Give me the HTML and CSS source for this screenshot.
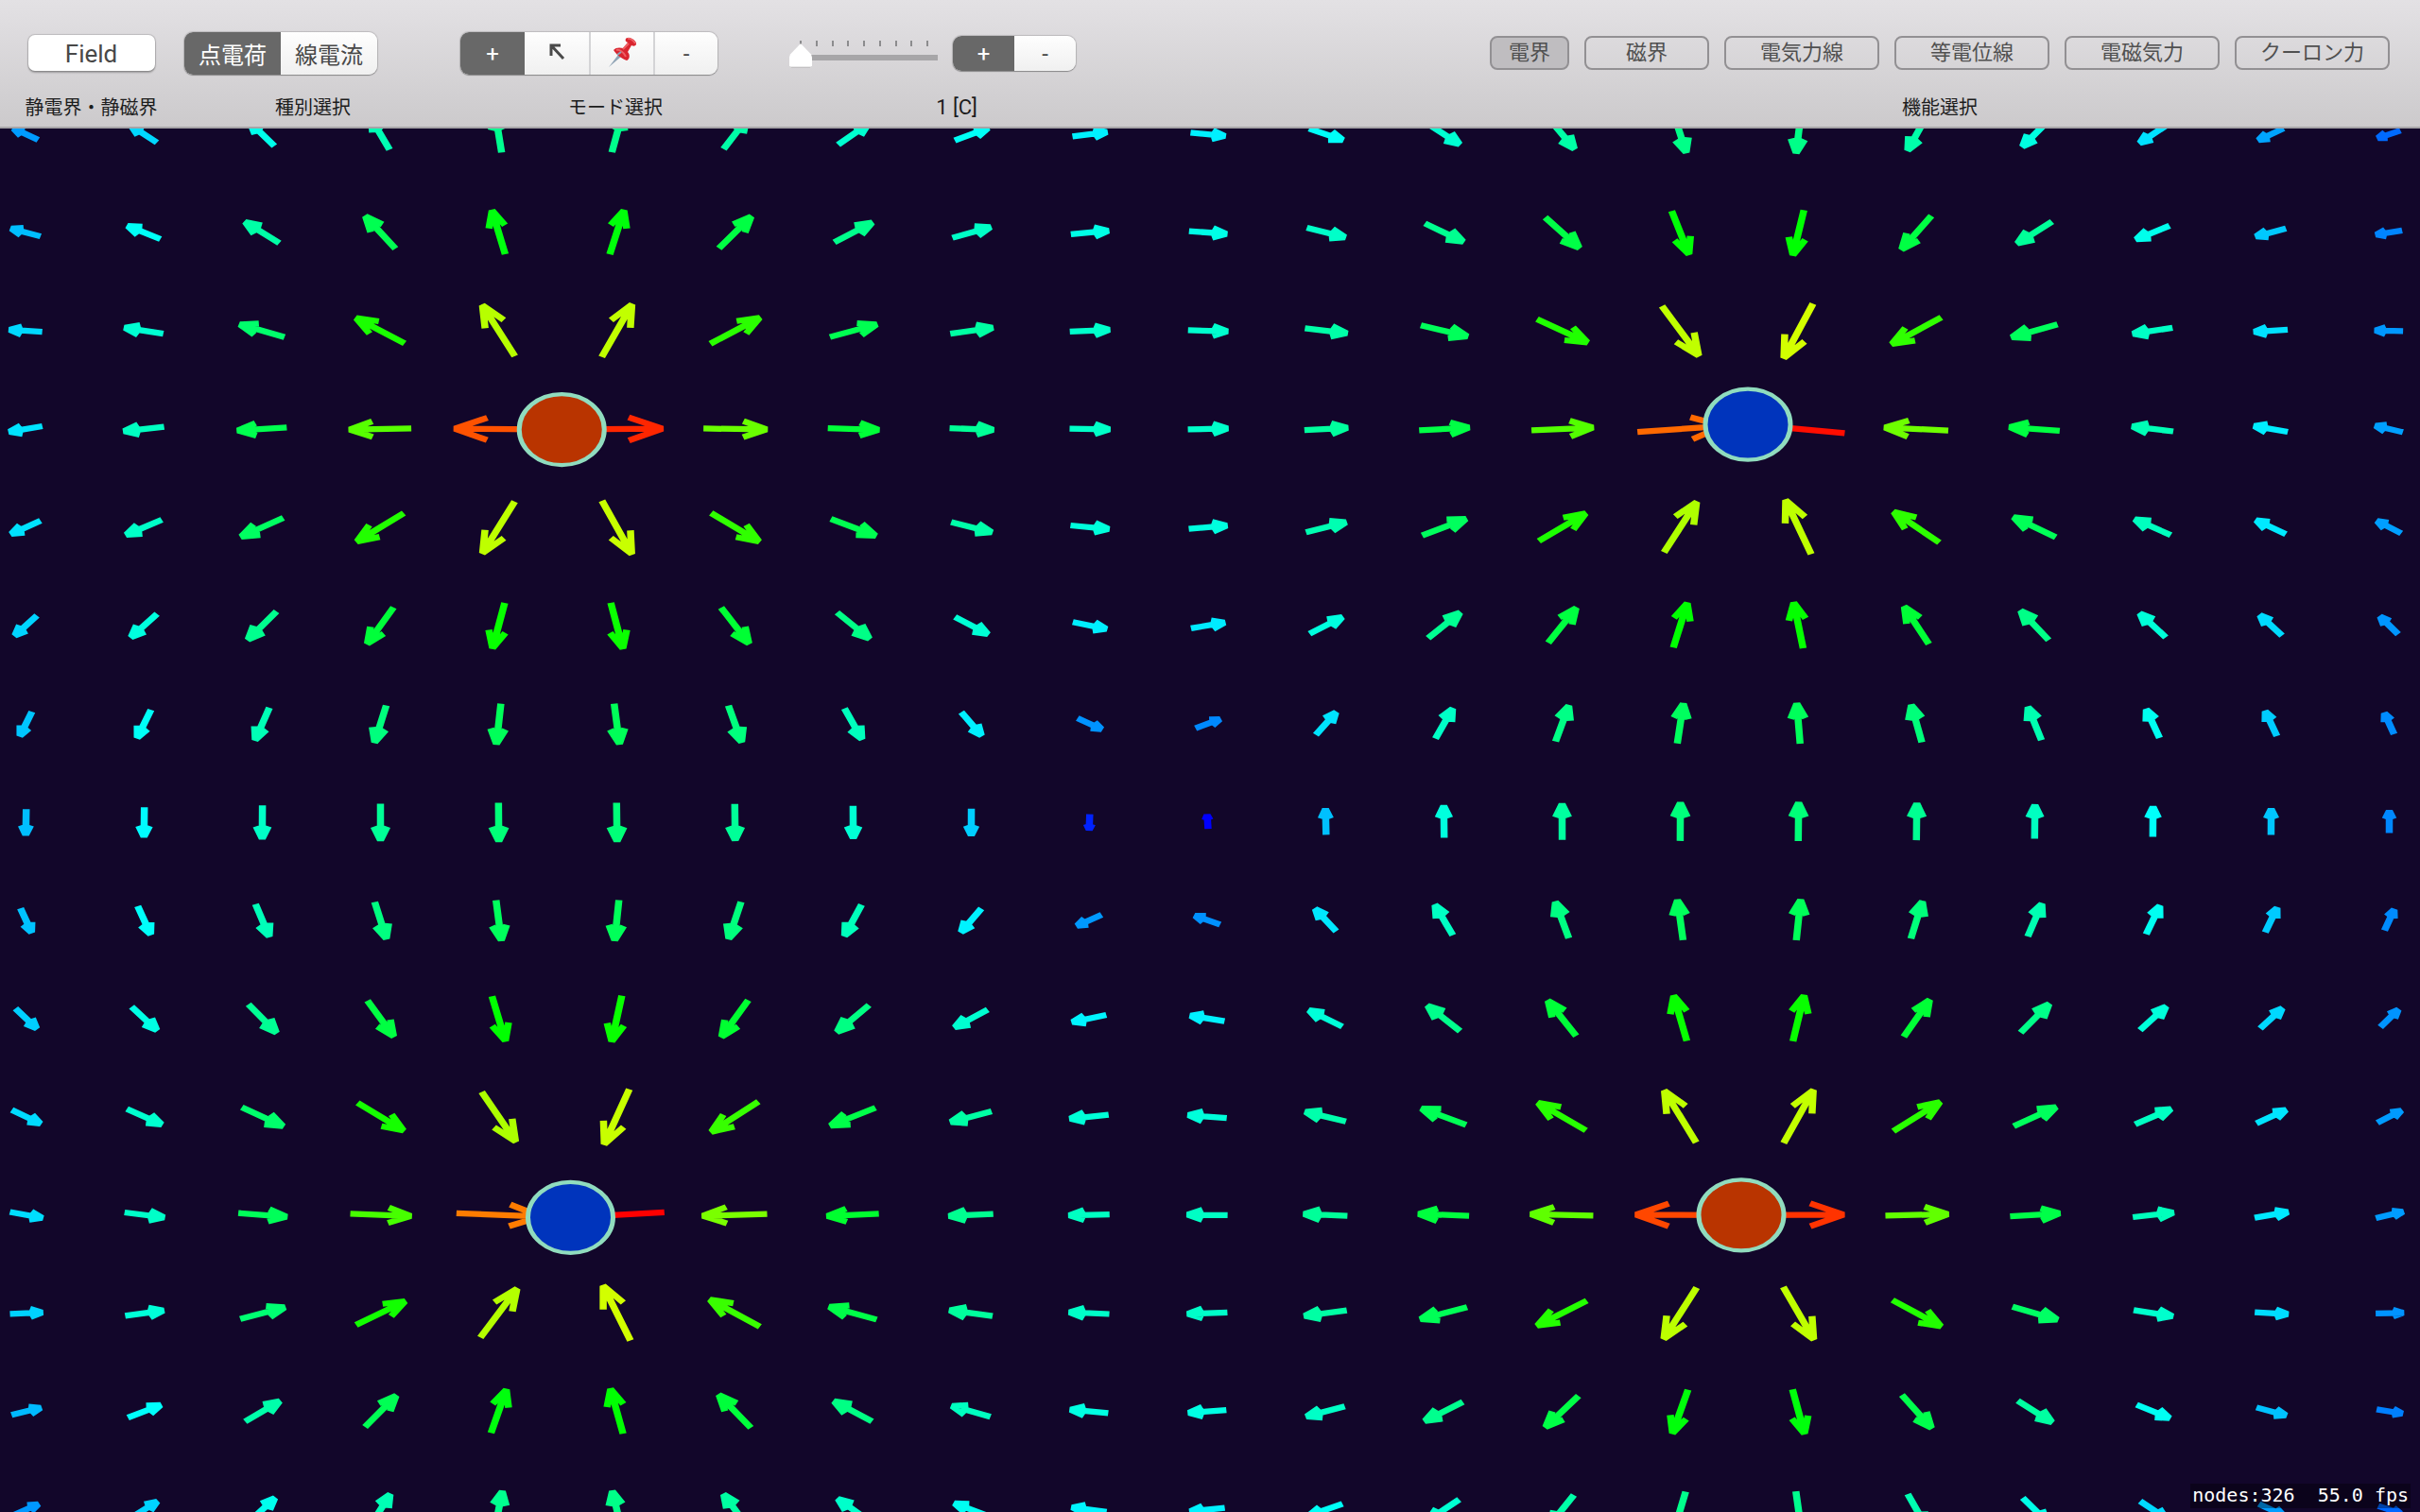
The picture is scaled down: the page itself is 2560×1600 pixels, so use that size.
FILE: index.html
```html
<!DOCTYPE html>
<html lang="ja">
<head>
  <meta charset="UTF-8" />
  <title>Field</title>
  <link rel="stylesheet" href="styles.css">
</head>
<body>
  <main class="window">
    <svg class="scene" id="scene" viewBox="0 0 1024 768" preserveAspectRatio="none" role="img" aria-label="電界">
      <g id="arrows"></g>
      <g id="charges"></g>
    </svg>

    <header class="toolbar">
      <div class="item item-field">
        <div class="controls"><button class="push">Field</button></div>
        <span class="caption">静電界・静磁界</span>
      </div>

      <div class="item item-kind">
        <div class="controls">
          <div class="segmented kinds">
            <button class="selected">点電荷</button>
            <button>線電流</button>
          </div>
        </div>
        <span class="caption">種別選択</span>
      </div>

      <div class="item item-mode">
        <div class="controls">
          <div class="segmented tools">
            <button class="selected">+</button>
            <button aria-label="移動">
              <svg width="18" height="20" viewBox="0 0 18 20">
                <path d="M3 14V3H13M3 3L16 17" fill="none" stroke="#4a4a4a" stroke-width="3" />
              </svg>
            </button>
            <button aria-label="固定">
              <svg width="34" height="34" viewBox="0 0 34 34">
                <path d="M13 20L16 22L3 33Z" fill="#8fa3b5" />
                <path d="M21 3C23 0 33 4 32 9C31 11 29 11 27 10L23 17C26 20 25 25 22 26C17 24 11 20 8 15C10 12 15 12 18 13L23 7C21 6 20 5 21 3Z" fill="#d9252f" />
                <path d="M23 3C25 2 30 5 31 8M18 14L24 8M11 15C14 14 19 17 21 22" fill="none" stroke="#ee5f64" stroke-width="2" />
                <path d="M12 20L16 17" stroke="#8fa3b5" stroke-width="2" />
              </svg>
            </button>
            <button>-</button>
          </div>
        </div>
        <span class="caption">モード選択</span>
      </div>

      <div class="item item-amount">
        <div class="controls">
          <div class="slider">
            <div class="ticks">
              <i></i><i></i><i></i><i></i><i></i><i></i><i></i><i></i><i></i>
            </div>
            <input type="range" id="amount" min="1" max="9" value="1">
          </div>
          <div class="segmented sign">
            <button class="selected">+</button>
            <button>-</button>
          </div>
        </div>
        <label class="caption" for="amount">1 [C]</label>
      </div>

      <div class="item item-function">
        <div class="controls">
          <button class="toggle short on">電界</button>
          <button class="toggle medium">磁界</button>
          <button class="toggle">電気力線</button>
          <button class="toggle">等電位線</button>
          <button class="toggle">電磁気力</button>
          <button class="toggle">クーロン力</button>
        </div>
        <span class="caption">機能選択</span>
      </div>
    </header>

    <div class="stats">nodes:326&nbsp; 55.0 fps</div>
  </main>

  <script src="script.js"></script>
</body>
</html>
```
FILE: styles.css
```css
* {
  box-sizing: border-box;
}

body {
  margin: 0;
  background: #12062a;
  font-family: Roboto, "Noto Sans CJK JP", sans-serif;
}

.window {
  position: relative;
  display: grid;
  height: 100vh;
  overflow: hidden;
}

.scene {
  grid-area: 1 / 1;
  display: block;
  width: 100%;
  height: 100%;
  min-height: 0;
}

/* toolbar */
.toolbar {
  grid-area: 1 / 1;
  align-self: start;
  display: flex;
  gap: 20px;
  padding: 32px 32px 2px 18px;
  background: linear-gradient(#e3e1e4, #cccacc);
  border-bottom: 2px solid #a6a4a7;
}

.item {
  display: flex;
  flex-direction: column;
  gap: 16px;
}

.item-field {
  width: 157px;
}

.item-kind {
  width: 272px;
}

.item-mode {
  width: 328px;
}

.item-amount {
  width: 354px;
}

.item-function {
  margin-left: auto;
}

.item-field .controls {
  justify-content: center;
}

.controls {
  display: flex;
  align-items: center;
  gap: 16px;
  height: 48px;
}

.caption {
  font-size: 20px;
  line-height: 36px;
  text-align: center;
  color: #1c1c1c;
}

.item-amount .caption {
  font-size: 22px;
}

button {
  margin: 0;
  padding: 0;
  border: none;
  background: none;
  font-family: inherit;
  font-size: 24px;
  color: #484848;
}

.push {
  width: 134px;
  height: 38px;
  padding-top: 2px;
  border-radius: 7px;
  background: #fff;
  font-size: 26px;
  box-shadow: 0 0 1px 1px rgba(0, 0, 0, 0.15), 0 2px 2px rgba(0, 0, 0, 0.25);
}

.segmented {
  display: flex;
  height: 45px;
  border-radius: 9px;
  overflow: hidden;
  background: linear-gradient(#fefefe, #f0f0f0);
  box-shadow: 0 0 1px 1px rgba(0, 0, 0, 0.15), 0 1px 1px rgba(0, 0, 0, 0.25);
}

.segmented button {
  display: flex;
  align-items: center;
  justify-content: center;
  padding-top: 2px;
}

.segmented button + button {
  border-left: 2px solid #d4d4d6;
}

.segmented .selected {
  background: #686868;
  color: #fff;
}

.segmented .selected + button {
  border-left: none;
}

.kinds button {
  width: 102px;
  padding-top: 0;
}

.tools button {
  width: 68px;
}

.tools svg {
  margin-bottom: 4px;
}

.sign {
  height: 37px;
}

.sign button {
  width: 65px;
}

/* slider */
.slider {
  width: 157px;
  height: 32px;
  padding-top: 3px;
}

.ticks {
  display: flex;
  justify-content: space-between;
  padding: 0 10px 0 11px;
}

.ticks i {
  width: 2px;
  height: 6px;
  background: #8c8c8e;
}

.slider input {
  display: block;
  appearance: none;
  width: 100%;
  height: 26px;
  margin: -3px 0 0;
  background: linear-gradient(#a7a6a8, #a7a6a8) 8px 12px / 100% 6px no-repeat;
  border-radius: 3px;
}

.slider input::-webkit-slider-thumb {
  appearance: none;
  width: 24px;
  height: 26px;
  background: linear-gradient(#fff 92%, #b0aeb0);
  clip-path: polygon(50% 0, 96% 44%, 100% 56%, 100% 90%, 90% 100%, 10% 100%, 0 90%, 0 56%, 4% 44%);
}

.toggle {
  width: 164px;
  height: 36px;
  border: 2px solid #929093;
  border-radius: 8px;
  font-size: 22px;
  line-height: 32px;
  color: #505050;
}

.toggle.short {
  width: 84px;
}

.toggle.medium {
  width: 132px;
}

.toggle.on {
  background: #bfbdc0;
}

/* field */
.arrow {
  fill: none;
  stroke-width: 3;
  stroke-linejoin: bevel;
}

.charge {
  stroke: #90dcbe;
  stroke-width: 2;
}

.positive {
  fill: #b93400;
}

.negative {
  fill: #0034bc;
}

.stats {
  position: absolute;
  right: 10px;
  bottom: 4px;
  padding: 0 2px 2px;
  background: rgba(0, 0, 0, 0.35);
  color: #fff;
  font-family: "DejaVu Sans Mono", monospace;
  font-size: 20px;
  line-height: 24px;
}
```
FILE: script.js
```js
const SVG_NS = 'http://www.w3.org/2000/svg';
const arrows = document.getElementById('arrows');
const chargeLayer = document.getElementById('charges');

const STEP_X = 50;
const STEP_Y = 49.9;
const ORIGIN_X = 11;
const ORIGIN_Y = 18.3;
const WIDTH = 1024;
const HEIGHT = 768;

const charges = [
  { x: 237.7, y: 218.2, q: 1 },
  { x: 739.6, y: 215.6, q: -1 },
  { x: 241.4, y: 618.4, q: -1 },
  { x: 736.8, y: 617.2, q: 1 }
];

function fieldAt(x, y) {
  let ex = 0;
  let ey = 0;
  charges.forEach(c => {
    const dx = x - c.x;
    const dy = y - c.y;
    const r = Math.hypot(dx, dy);
    ex += c.q * dx / (r * r * r);
    ey += c.q * dy / (r * r * r);
  });
  return { ex, ey };
}

function drawArrow(x, y) {
  const { ex, ey } = fieldAt(x, y);
  const strength = Math.log(Math.hypot(ex, ey));
  const angle = Math.atan2(ey, ex);

  // length and hue both follow the log of the field
  const length = Math.max(7, 71.3 + 5.2 * strength);
  const hue = Math.min(240, Math.max(0, -229 - 37.8 * strength));

  const dx = Math.cos(angle) * length / 2;
  const dy = Math.sin(angle) * length / 2;
  const tipX = x + dx;
  const tipY = y + dy;
  const head = length * 0.4;
  const barb = side => {
    const a = angle + Math.PI + side * Math.PI / 8;
    return `${tipX + Math.cos(a) * head} ${tipY + Math.sin(a) * head}`;
  };

  const path = document.createElementNS(SVG_NS, 'path');
  path.setAttribute('class', 'arrow');
  path.setAttribute('d', `M${x - dx} ${y - dy}L${tipX} ${tipY}L${barb(1)}M${barb(-1)}L${tipX} ${tipY}L${barb(1)}`);
  path.setAttribute('stroke', `hsl(${hue}, 100%, 50%)`);
  arrows.appendChild(path);
}

for (let x = ORIGIN_X; x < WIDTH; x += STEP_X) {
  for (let y = ORIGIN_Y; y < HEIGHT; y += STEP_Y) {
    drawArrow(x, y);
  }
}

charges.forEach(c => {
  const circle = document.createElementNS(SVG_NS, 'circle');
  circle.setAttribute('class', `charge ${c.q > 0 ? 'positive' : 'negative'}`);
  circle.setAttribute('cx', c.x);
  circle.setAttribute('cy', c.y);
  circle.setAttribute('r', 18);
  chargeLayer.appendChild(circle);
});
```
